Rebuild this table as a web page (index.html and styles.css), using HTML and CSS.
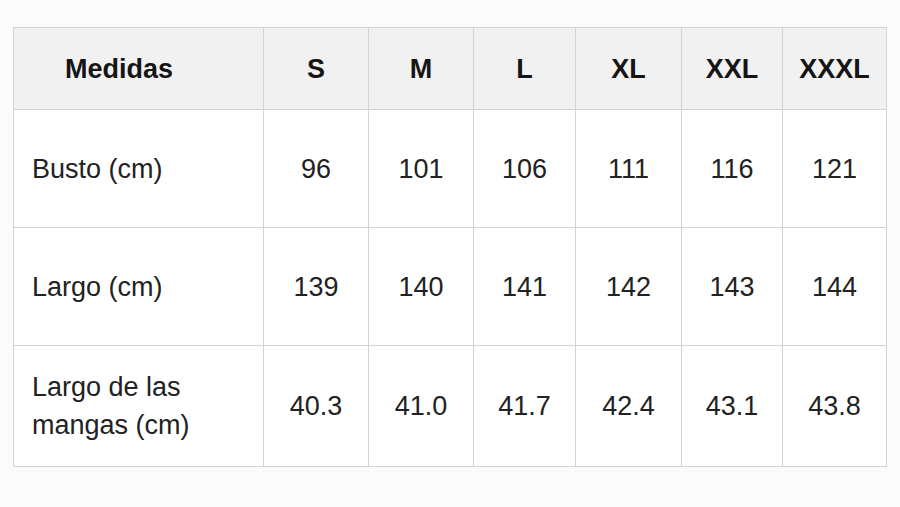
FILE: index.html
```html
<!DOCTYPE html>
<html lang="es">
<head>
<meta charset="utf-8">
<link rel="stylesheet" href="styles.css">
</head>
<body>
<table class="sizes">
  <colgroup>
    <col class="c0"><col class="c1"><col class="c2"><col class="c3"><col class="c4"><col class="c5"><col class="c6">
  </colgroup>
  <thead>
    <tr class="head">
      <th class="first">Medidas</th><th>S</th><th>M</th><th>L</th><th>XL</th><th>XXL</th><th>XXXL</th>
    </tr>
  </thead>
  <tbody>
    <tr class="r1">
      <td class="label">Busto (cm)</td><td>96</td><td>101</td><td>106</td><td>111</td><td>116</td><td>121</td>
    </tr>
    <tr class="r2">
      <td class="label">Largo (cm)</td><td>139</td><td>140</td><td>141</td><td>142</td><td>143</td><td>144</td>
    </tr>
    <tr class="r3">
      <td class="label">Largo de las<br>mangas (cm)</td><td>40.3</td><td>41.0</td><td>41.7</td><td>42.4</td><td>43.1</td><td>43.8</td>
    </tr>
  </tbody>
</table>
</body>
</html>
```
FILE: styles.css
```css
html, body {
  margin: 0;
  padding: 0;
  background: #fbfbfb;
}
body {
  padding: 27px 0 0 13px;
  font-family: "Liberation Sans", Arial, sans-serif;
  color: #1a1a1a;
}
.sizes {
  border-collapse: collapse;
  table-layout: fixed;
  width: 873px;
  background: #ffffff;
}
.c0 { width: 250px; }
.c1 { width: 105px; }
.c2 { width: 105px; }
.c3 { width: 102px; }
.c4 { width: 106px; }
.c5 { width: 101px; }
.c6 { width: 104px; }
.sizes th, .sizes td {
  border: 1px solid #d3d3d3;
  text-align: center;
  vertical-align: middle;
  padding: 0;
  font-size: 27px;
  line-height: 38px;
}
.sizes th {
  background: #f1f1f1;
  font-weight: bold;
  color: #151515;
}
.sizes th.first {
  text-align: left;
  padding-left: 51px;
}
.sizes td {
  font-weight: normal;
  color: #222222;
}
.sizes td.label {
  text-align: left;
  padding-left: 18px;
}
.head { height: 82px; }
.r1 { height: 118px; }
.r2 { height: 118px; }
.r3 { height: 121px; }
```
